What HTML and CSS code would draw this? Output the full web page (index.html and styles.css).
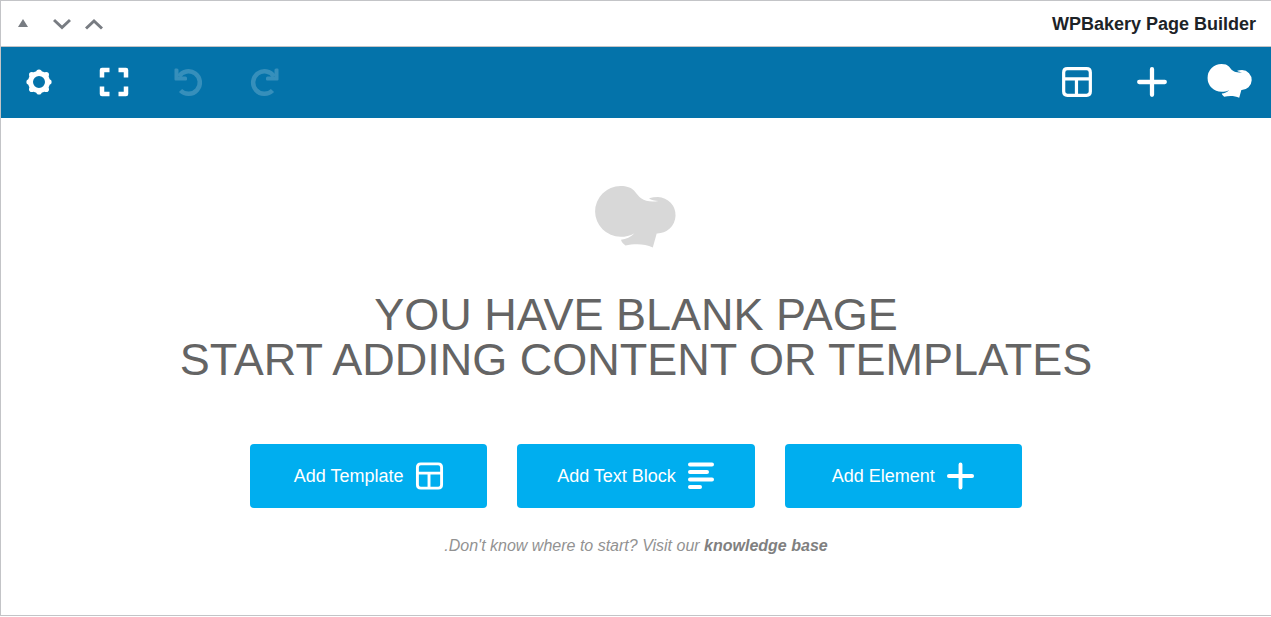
FILE: index.html
```html
<!DOCTYPE html>
<html lang="en">
<head>
<meta charset="utf-8">
<meta name="viewport" content="width=device-width, initial-scale=1">
<title>WPBakery Page Builder</title>
<link rel="stylesheet" href="styles.css">
</head>
<body>
<svg class="symbols" aria-hidden="true">
  <symbol id="hat" viewBox="0 0 82 62">
    <path d="M25.500 0C32 0 36 1.500 39 4.500C42 8 43.500 10.500 46.500 12.500C50 15 56 16.500 63.500 15C60 14.800 56 14 54 12.200C57 11.400 60 11 63 11A18.200 18.200 0 0 1 61.700 47.400L57.800 61.600C49 57 38 58 30.500 59.500C28.500 58 26.500 56 26 53.700C31 53 36 51 39.500 47.200C35 49.800 30.500 50.800 25.500 50.800A25.400 25.400 0 0 1 25.500 0Z"/>
  </symbol>
  <symbol id="layout" viewBox="0 0 30 30">
    <path fill="none" stroke="currentColor" stroke-width="3" d="M6 2.500H24Q27.500 2.500 27.500 6V24Q27.500 27.500 24 27.500H6Q2.500 27.500 2.500 24V6Q2.500 2.500 6 2.500ZM2.500 12H27.500M14.500 12V27.500"/>
  </symbol>
  <symbol id="plus" viewBox="0 0 30 30">
    <path fill="none" stroke="currentColor" stroke-width="4" stroke-linecap="round" d="M15 3V27M3 15H27"/>
  </symbol>
  <symbol id="undo" viewBox="0 0 30 30">
    <path fill="none" stroke="currentColor" stroke-width="4.500" d="M5 9.500A11.300 11.300 0 1 1 6.500 23.500"/>
    <path d="M.5 2.500Q.5 1.500 1.500 1.500H3Q4.500 1.500 4.500 3V9.500H11.500Q13 9.500 13 11V12.500Q13 13.500 12 13.500H1.500Q.5 13.500 .5 12.500Z"/>
  </symbol>
</svg>
<main class="panel">
  <header class="panel-header">
    <div class="handles">
      <button class="handle" type="button" aria-label="Toggle panel"><svg width="10" height="9" viewBox="0 0 10 9"><path d="M5 0L10 8H0Z"/></svg></button>
      <button class="handle" type="button" aria-label="Move down"><svg width="18" height="12" viewBox="0 0 18 12"><path class="chevron" d="M1 2L9 9.500L17 2"/></svg></button>
      <button class="handle" type="button" aria-label="Move up"><svg width="18" height="12" viewBox="0 0 18 12"><path class="chevron" d="M1 10.500L9 3L17 10.500"/></svg></button>
    </div>
    <h2 class="panel-title">WPBakery Page Builder</h2>
  </header>
  <nav class="toolbar" aria-label="Builder tools">
    <div class="tools">
      <button class="tool" type="button" aria-label="Settings"><svg width="26" height="26" viewBox="0 0 26 26"><circle cx="13" cy="13" r="8.500" fill="none" stroke="currentColor" stroke-width="5"/><g><circle cx="13" cy="3.200" r="2.800"/><circle cx="20.200" cy="5.800" r="2.800"/><circle cx="22.800" cy="13" r="2.800"/><circle cx="20.200" cy="20.200" r="2.800"/><circle cx="13" cy="22.800" r="2.800"/><circle cx="5.800" cy="20.200" r="2.800"/><circle cx="3.200" cy="13" r="2.800"/><circle cx="5.800" cy="5.800" r="2.800"/></g></svg></button>
      <button class="tool" type="button" aria-label="Full screen"><svg width="30" height="30" viewBox="0 0 30 30"><path fill="none" stroke="currentColor" stroke-width="4.500" stroke-linejoin="round" d="M10.500 3H3V10.500M19.500 3H27V10.500M3 19.500V27H10.500M27 19.500V27H19.500"/></svg></button>
      <button class="tool" type="button" aria-label="Undo" disabled><svg width="30" height="30"><use href="#undo"/></svg></button>
      <button class="tool" type="button" aria-label="Redo" disabled><svg class="mirrored" width="30" height="30"><use href="#undo"/></svg></button>
    </div>
    <div class="tools">
      <button class="tool" type="button" aria-label="Templates"><svg width="32" height="32"><use href="#layout"/></svg></button>
      <button class="tool" type="button" aria-label="Add element"><svg width="32" height="32"><use href="#plus"/></svg></button>
      <a class="brand" href="#" aria-label="WPBakery"><svg width="46" height="34"><use href="#hat"/></svg></a>
    </div>
  </nav>
  <section class="welcome">
    <svg class="welcome-logo" width="82" height="62" aria-hidden="true"><use href="#hat"/></svg>
    <h1 class="welcome-title">YOU HAVE BLANK PAGE<br>START ADDING CONTENT OR TEMPLATES</h1>
    <div class="actions">
      <button class="action" type="button">Add Template<svg width="29" height="30"><use href="#layout"/></svg></button>
      <button class="action" type="button">Add Text Block<svg width="28" height="30" viewBox="0 0 28 30"><path fill="none" stroke="currentColor" stroke-width="4" stroke-linecap="round" d="M3 3.500H25M3 11H20M3 18.500H25M3 26H13"/></svg></button>
      <button class="action" type="button">Add Element<svg width="29" height="30"><use href="#plus"/></svg></button>
    </div>
    <p class="hint">.Don't know where to start? Visit our <a href="#">knowledge base</a></p>
  </section>
</main>
</body>
</html>
```
FILE: styles.css
```css
* { box-sizing: border-box; }

body {
  margin: 0;
  background: #fff;
  font-family: "Liberation Sans", Arial, sans-serif;
}

button {
  padding: 0;
  border: 0;
  background: none;
  color: inherit;
  font: inherit;
  cursor: pointer;
}

svg {
  display: block;
  flex: none;
  fill: currentColor;
}

.symbols {
  position: absolute;
  width: 0;
  height: 0;
}

.panel {
  border: 1px solid #c3c4c7;
  border-right: 0;
}

.panel-header {
  display: flex;
  align-items: center;
  justify-content: space-between;
  height: 46px;
  padding: 0 15px 0 6px;
  border-bottom: 1px solid #c3c4c7;
}

.handles { display: flex; }

.handle {
  display: grid;
  place-items: center;
  width: 32px;
  height: 36px;
  color: #787c82;
}

.handle:first-child { margin-right: 7px; }

.chevron {
  fill: none;
  stroke: currentColor;
  stroke-width: 3;
}

.panel-title {
  margin: 0;
  color: #1d2327;
  font-size: 18px;
  line-height: 24px;
}

.toolbar {
  display: flex;
  justify-content: space-between;
  height: 71px;
  background: #0473aa;
  color: #fff;
}

.tools { display: flex; }

.tool,
.brand {
  display: grid;
  place-items: center;
  width: 75px;
  padding-bottom: 2px;
  color: #fff;
}

.brand {
  width: 82px;
  padding-bottom: 4px;
}

.tool:disabled { color: #368fbb; cursor: default; }

.mirrored { transform: scaleX(-1); }

.welcome {
  display: flex;
  flex-direction: column;
  align-items: center;
  padding: 68px 20px 57px;
}

.welcome-logo { color: #d8d8d8; }

.welcome-title {
  margin: 44px 0 62px;
  color: #646464;
  font-size: 45px;
  font-weight: 400;
  line-height: 45px;
  text-align: center;
}

.actions {
  display: grid;
  grid-template-columns: repeat(3, 1fr);
  gap: 30px;
  width: 100%;
  max-width: 772px;
}

.action {
  display: flex;
  align-items: center;
  justify-content: center;
  gap: 11px;
  height: 64px;
  border-radius: 4px;
  background: #00aeef;
  color: #fff;
  font-size: 18px;
}

.hint {
  margin: 26px 0 0;
  color: #929292;
  font-size: 16px;
  font-style: italic;
  line-height: 24px;
}

.hint a {
  color: #808080;
  font-weight: 700;
  text-decoration: none;
}
```
